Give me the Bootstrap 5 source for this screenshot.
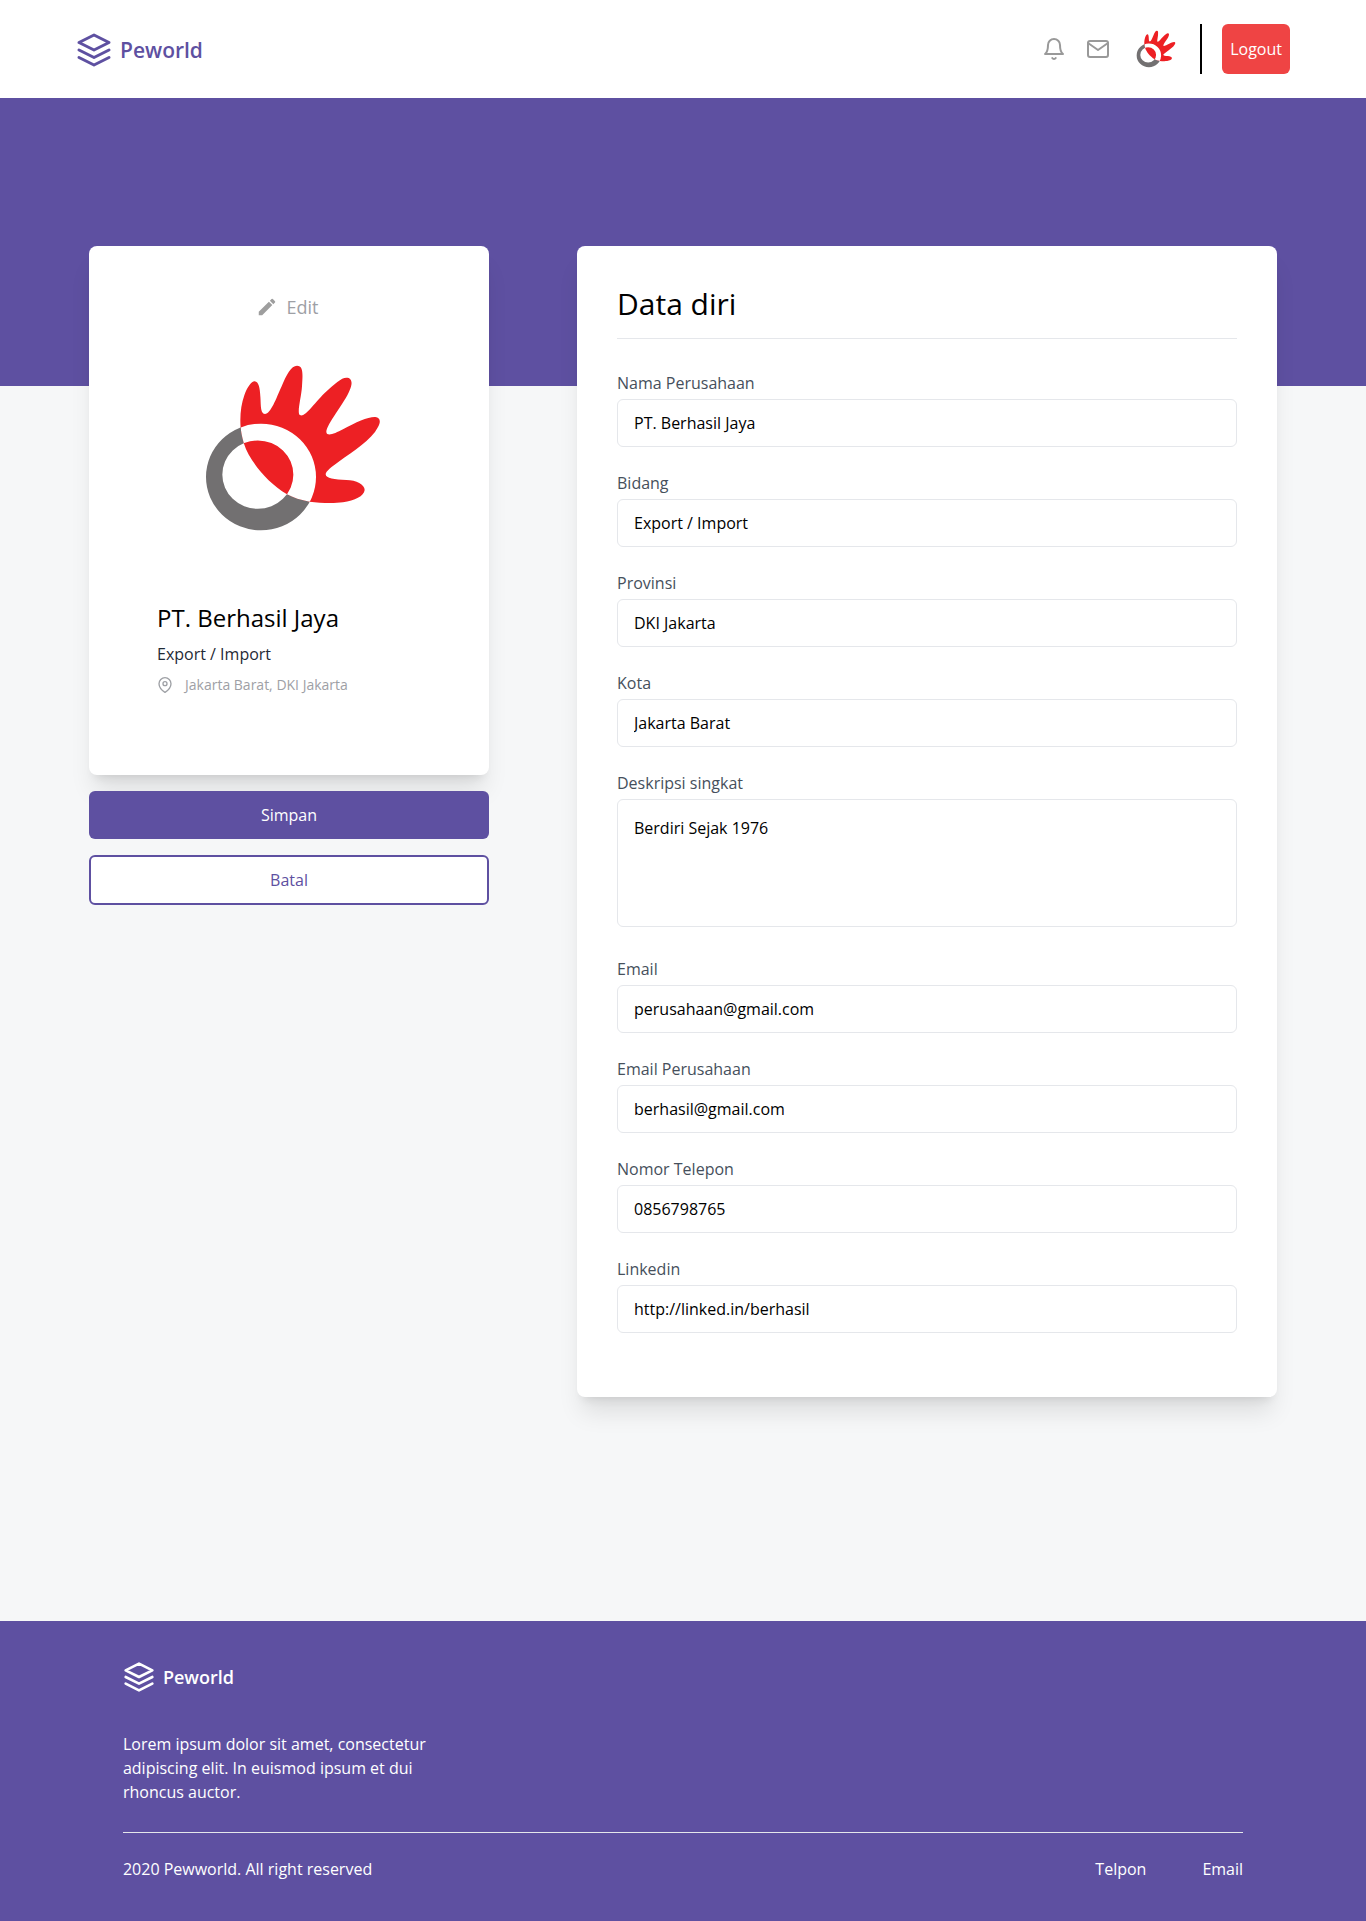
<!DOCTYPE html>
<html lang="id">
<head>
<meta charset="utf-8">
<meta name="viewport" content="width=device-width, initial-scale=1">
<title>Peworld - Edit Profil Perusahaan</title>
<link href="https://cdn.jsdelivr.net/npm/bootstrap@5.3.0/dist/css/bootstrap.min.css" rel="stylesheet">
<style>
  :root { --pw-purple: #5e50a1; --pw-muted: #9ea0a5; --pw-line: #e5e7eb; }
  body { font-family: "Open Sans", "Noto Sans", sans-serif; font-size: 16px; line-height: 24px; color: #000; background: #f6f7f8; }
  svg { display: block; flex: none; }
  .stroke-icon { fill: none; stroke: currentColor; stroke-width: 2; stroke-linecap: round; stroke-linejoin: round; }
  .site-header { padding: 24px 76px; background: #fff; }
  .brand { display: flex; align-items: center; gap: 8px; font-weight: 600; font-size: 21px; padding-top: 2px; color: var(--pw-purple); text-decoration: none; }
  .header-tools { gap: 20px; color: #999; }
  .header-tools a { color: inherit; }
  .header-tools .profile-link { margin-left: 6px; }
  .header-divider { width: 2px; height: 50px; background: #000; margin-left: 4px; }
  .btn-logout { height: 50px; padding: 0 8px; background: #ef4444; color: #fff; border: 0; border-radius: 6px; }
  .btn-logout:hover { background: #dc2626; color: #fff; }
  .profile-main { padding: 148px 16px 224px; background: linear-gradient(var(--pw-purple), var(--pw-purple)) top / 100% 288px no-repeat; }
  .profile-wrap { max-width: 1188px; gap: 88px; }
  .profile-side { flex: 0 0 400px; }
  .panel { background: #fff; border-radius: 8px; box-shadow: 0 20px 25px -5px rgba(0,0,0,.1), 0 8px 10px -6px rgba(0,0,0,.1); }
  .company-panel { padding: 47px 68px 80px; }
  .btn-edit { font-size: 18px; line-height: 28px; gap: 9px; color: var(--pw-muted); border: 0; padding: 0 4px 0 0; }
  .company-logo { margin: 42px 38px 69px auto; }
  .company-name { font-size: 24px; line-height: 32px; font-weight: 400; margin: 0 0 8px; }
  .company-field { color: #1f2a36; margin: 0 0 8px; }
  .company-place { font-size: 14px; line-height: 21px; gap: 12px; color: var(--pw-muted); margin: 0; }
  .btn-simpan, .btn-batal { height: 48px; border-radius: 6px; padding: 0; }
  .btn-simpan { background: var(--pw-purple); color: #fff; border: 0; }
  .btn-batal { height: 50px; background: #fff; color: var(--pw-purple); border: 2px solid var(--pw-purple); }
  .btn-simpan:hover { background: #4c4085; color: #fff; }
  .btn-batal:hover { border-color: var(--pw-purple); color: #4c4085; }
  .form-panel { padding: 40px 40px 64px; min-width: 0; }
  .panel-title { font-size: 30px; line-height: 36px; font-weight: 400; padding-bottom: 16px; margin: 0 0 32px; border-bottom: 1px solid var(--pw-line); }
  .field-stack { display: grid; gap: 24px; }
  .field-stack .form-label { display: block; color: #46505c; margin-bottom: 4px; }
  .field-stack .form-control { height: 48px; padding: 0 16px; border: 1px solid var(--pw-line); border-radius: 6px; color: #000; background: #fff; line-height: 24px; }
  .field-stack textarea.form-control { display: inline-block; vertical-align: baseline; height: 128px; padding: 16px; resize: none; }
  .site-footer { background: var(--pw-purple); color: #fff; padding: 40px 9%; }
  .site-footer .brand { font-size: 18px; padding-top: 0; color: #fff; }
  .site-footer a { color: #fff; text-decoration: none; }
  .footer-text { max-width: 320px; margin: 39px 0 28px; }
  .footer-bottom { border-top: 1px solid var(--pw-line); padding-top: 24px; }
  .footer-links { gap: 56px; }
  @media (max-width: 991px) {
    .site-header { padding: 24px 16px; }
    .profile-wrap { flex-direction: column; gap: 32px; }
    .profile-side { flex: none; width: 100%; }
    .profile-wrap > .form-panel { width: 100%; }
    .company-logo { margin-right: auto; }
  }
</style>
<script src="https://cdn.jsdelivr.net/npm/bootstrap@5.3.0/dist/js/bootstrap.bundle.min.js" defer></script>
</head>
<body>

<svg width="0" height="0" class="position-absolute" aria-hidden="true">
  <defs>
    <path id="hand-shape" d="M483,594 C480,560 484,525 494,497 C503,472 515,455 525,455 C537,456 541,475 542,500 C544,520 541,553 556,553 C573,553 590,505 605,472 C620,435 635,408 652,408 C672,408 669,435 667,470 C665,505 649,557 663,557 C678,560 700,525 735,490 C765,462 785,444 800,444 C817,444 820,460 810,482 C795,520 740,585 740,607 C742,622 765,612 790,599 C830,577 865,561 887,562 C902,563 904,578 895,592 C875,632 820,665 780,694 C755,712 738,725 738,734 C738,746 765,750 800,751 C830,751 855,765 855,781 C853,800 825,812 790,818 C760,822 720,820 690,816 C665,812 640,804 622,794 C560,757 508,690 493,642 C488,625 485,610 483,594 Z"/>
    <path id="ring-shape" fill-rule="evenodd" clip-rule="evenodd" d="M379,742 A165,160 0 1 1 709,742 A165,160 0 1 1 379,742 Z M428,735 A106,102 0 1 1 641,735 A106,102 0 1 1 428,735 Z"/>
    <clipPath id="hand-clip"><use href="#hand-shape"/></clipPath>
  </defs>
  <symbol id="hand-logo" viewBox="370 400 540 510">
    <use href="#ring-shape" fill="#727071"/>
    <use href="#hand-shape" fill="#ed2024"/>
    <g clip-path="url(#hand-clip)"><use href="#ring-shape" fill="#fff"/></g>
  </symbol>
  <symbol id="layers" viewBox="0 0 24 24">
    <path d="M12 2 2 7l10 5 10-5zM2 17l10 5 10-5M2 12l10 5 10-5"/>
  </symbol>
</svg>

<header class="site-header d-flex justify-content-between align-items-center">
  <a class="brand" href="#"><svg class="stroke-icon" width="36" height="36" aria-hidden="true"><use href="#layers"/></svg>Peworld</a>
  <div class="header-tools d-flex align-items-center">
    <a href="#" aria-label="Notifikasi"><svg class="stroke-icon" width="24" height="24" viewBox="0 0 24 24"><path d="M18 8A6 6 0 0 0 6 8c0 7-3 9-3 9h18s-3-2-3-9M13.73 21a2 2 0 0 1-3.46 0"/></svg></a>
    <a href="#" aria-label="Pesan"><svg class="stroke-icon" width="24" height="24" viewBox="0 0 24 24"><rect x="2" y="4" width="20" height="16" rx="2"/><path d="m22 6-10 7L2 6"/></svg></a>
    <a href="#" class="profile-link" aria-label="Profil"><svg width="40" height="38"><use href="#hand-logo"/></svg></a>
    <div class="header-divider"></div>
    <button type="button" class="btn btn-logout">Logout</button>
  </div>
</header>

<main class="profile-main">
  <div class="profile-wrap d-flex align-items-start mx-auto">
    <div class="profile-side d-flex flex-column gap-3">
      <section class="panel company-panel">
        <button type="button" class="btn btn-edit d-flex align-items-center mx-auto">
          <svg width="22" height="22" viewBox="0 0 24 24" fill="#9e9e9e" aria-hidden="true"><path d="M3 17.25V21h3.75L17.81 9.94l-3.75-3.75L3 17.25zM20.71 7.04a1 1 0 0 0 0-1.41l-2.34-2.34a1 1 0 0 0-1.41 0l-1.83 1.83 3.75 3.75 1.83-1.83z"/></svg>Edit
        </button>
        <svg class="company-logo" width="180" height="170" role="img" aria-label="Logo perusahaan"><use href="#hand-logo"/></svg>
        <h1 class="company-name">PT. Berhasil Jaya</h1>
        <p class="company-field">Export / Import</p>
        <p class="company-place d-flex align-items-center"><svg class="stroke-icon" width="16" height="16" viewBox="0 0 24 24" aria-hidden="true"><path d="M21 10c0 7-9 13-9 13s-9-6-9-13a9 9 0 0 1 18 0z"/><circle cx="12" cy="10" r="3"/></svg>Jakarta Barat, DKI Jakarta</p>
      </section>
      <button type="submit" form="company-form" class="btn btn-simpan w-100">Simpan</button>
      <button type="button" class="btn btn-batal w-100">Batal</button>
    </div>

    <section class="panel form-panel flex-grow-1">
      <h2 class="panel-title">Data diri</h2>
      <form id="company-form" class="field-stack">
        <div><label class="form-label" for="nama">Nama Perusahaan</label><input class="form-control" id="nama" type="text" value="PT. Berhasil Jaya"></div>
        <div><label class="form-label" for="bidang">Bidang</label><input class="form-control" id="bidang" type="text" value="Export / Import"></div>
        <div><label class="form-label" for="provinsi">Provinsi</label><input class="form-control" id="provinsi" type="text" value="DKI Jakarta"></div>
        <div><label class="form-label" for="kota">Kota</label><input class="form-control" id="kota" type="text" value="Jakarta Barat"></div>
        <div><label class="form-label" for="deskripsi">Deskripsi singkat</label><textarea class="form-control" id="deskripsi">Berdiri Sejak 1976</textarea></div>
        <div><label class="form-label" for="email">Email</label><input class="form-control" id="email" type="email" value="perusahaan@gmail.com"></div>
        <div><label class="form-label" for="email-perusahaan">Email Perusahaan</label><input class="form-control" id="email-perusahaan" type="email" value="berhasil@gmail.com"></div>
        <div><label class="form-label" for="telepon">Nomor Telepon</label><input class="form-control" id="telepon" type="tel" value="0856798765"></div>
        <div><label class="form-label" for="linkedin">Linkedin</label><input class="form-control" id="linkedin" type="url" value="http://linked.in/berhasil"></div>
      </form>
    </section>
  </div>
</main>

<footer class="site-footer">
  <a class="brand" href="#"><svg class="stroke-icon" width="32" height="32" aria-hidden="true"><use href="#layers"/></svg>Peworld</a>
  <p class="footer-text">Lorem ipsum dolor sit amet, consectetur adipiscing elit. In euismod ipsum et dui rhoncus auctor.</p>
  <div class="footer-bottom d-flex justify-content-between">
    <span>2020 Pewworld. All right reserved</span>
    <nav class="footer-links d-flex" aria-label="Kontak"><a href="#">Telpon</a><a href="#">Email</a></nav>
  </div>
</footer>

</body>
</html>
